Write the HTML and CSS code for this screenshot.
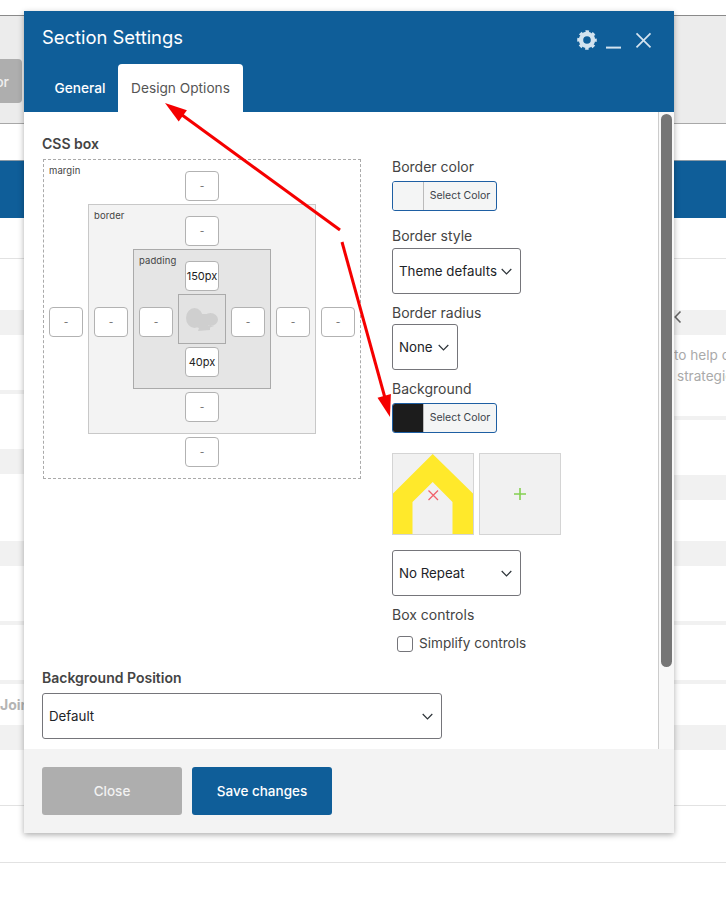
FILE: index.html
```html
<!DOCTYPE html>
<html lang="en">
<head>
<meta charset="utf-8">
<title>Section Settings</title>
<link rel="stylesheet" href="styles.css">
</head>
<body>
<div class="page">
  <div class="backdrop">
    <div class="bar-top"><span class="bar-btn">or</span></div>
    <div class="bar-blue"></div>
    <div class="rule rule-a"></div>
    <div class="cols">
      <div class="col col-left">
        <div class="band b-tall m51"></div>
        <div class="band b-thin m55"></div>
        <div class="band b-tall m55"></div>
        <div class="band b-tall m67"></div>
        <div class="band b-thin m55"></div>
        <div class="band b-thin m55"></div>
        <div class="join">Join</div>
        <div class="band b-tall m-join"></div>
        <div class="rule m55"></div>
      </div>
      <div class="col col-right">
        <div class="band b-tall m51 chev-band">
          <svg class="bg-chev" width="8" height="14" viewBox="0 0 8 14"><path d="M6.5 1.5 1.2 7l5.3 5.5" fill="none" stroke="#666" stroke-width="1.6"/></svg>
        </div>
        <p class="faint f1">to help o</p>
        <p class="faint f2">strategic</p>
        <div class="band b-thin m-r1"></div>
        <div class="band b-tall m55"></div>
        <div class="band b-tall m41"></div>
        <div class="band b-thin m55"></div>
        <div class="band b-thin m55"></div>
        <div class="band b-tall m41"></div>
        <div class="rule m55"></div>
      </div>
    </div>
    <div class="rule"></div>
  </div>

  <section class="modal">
    <header class="modal-head">
      <div class="head-top">
        <h1 class="title">Section Settings</h1>
        <div class="head-icons">
          <svg class="ic-gear" width="22" height="22" viewBox="0 0 22 22">
            <circle cx="11" cy="11" r="6" fill="none" stroke="#d3e3ef" stroke-width="4.4"/>
            <circle cx="11" cy="11" r="8.3" fill="none" stroke="#d3e3ef" stroke-width="3" stroke-dasharray="3.4 3.12" stroke-dashoffset="1.7"/>
          </svg>
          <svg class="ic-dash" width="17" height="22" viewBox="0 0 17 22"><path d="M1 18.6h15" stroke="#d3e3ef" stroke-width="2"/></svg>
          <svg class="ic-x" width="17" height="22" viewBox="0 0 17 22"><path d="M1.5 4.3l14 14M15.5 4.3l-14 14" stroke="#d3e3ef" stroke-width="1.7"/></svg>
        </div>
      </div>
      <nav class="tabs">
        <span class="tab">General</span>
        <span class="tab tab-active">Design Options</span>
      </nav>
    </header>

    <div class="modal-body">
      <div class="content">
        <div class="columns">
          <div class="col-box">
            <h2 class="label-strong box-title">CSS box</h2>
            <div class="box box-margin">
              <span class="box-name">margin</span>
              <span class="cell c-top"><span class="val">-</span></span>
              <span class="cell c-left"><span class="val">-</span></span>
              <div class="box box-border">
                <span class="box-name">border</span>
                <span class="cell c-top"><span class="val">-</span></span>
                <span class="cell c-left"><span class="val">-</span></span>
                <div class="box box-padding">
                  <span class="box-name">padding</span>
                  <span class="cell c-top"><span class="val val-set">150px</span></span>
                  <span class="cell c-left"><span class="val">-</span></span>
                  <div class="box-core">
                    <svg width="32" height="23" viewBox="0 0 32 23">
                      <ellipse cx="8.5" cy="10" rx="8.5" ry="10" fill="#cfcfcf"/>
                      <ellipse cx="24.5" cy="11.5" rx="7.5" ry="6.5" fill="#cfcfcf"/>
                      <path d="M14 6h8v12h6l-4 1.5V22l-12 1 1-3-5-2z" fill="#cfcfcf"/>
                    </svg>
                  </div>
                  <span class="cell c-right"><span class="val">-</span></span>
                  <span class="cell c-bottom"><span class="val val-set">40px</span></span>
                </div>
                <span class="cell c-right"><span class="val">-</span></span>
                <span class="cell c-bottom"><span class="val">-</span></span>
              </div>
              <span class="cell c-right"><span class="val">-</span></span>
              <span class="cell c-bottom"><span class="val">-</span></span>
            </div>
          </div>

          <div class="col-opts">
            <div class="label lb-color">Border color</div>
            <button class="colorbtn" type="button"><span class="swatch"></span><span class="colorbtn-text">Select Color</span></button>

            <div class="label lb-style">Border style</div>
            <div class="select sel-style"><span>Theme defaults</span>
              <svg class="chev" width="11" height="7" viewBox="0 0 11 7"><path d="M.7 1l4.8 4.8L10.3 1" fill="none" stroke="#2c3338" stroke-width="1.2"/></svg>
            </div>

            <div class="label lb-radius">Border radius</div>
            <div class="select sel-radius"><span>None</span>
              <svg class="chev" width="11" height="7" viewBox="0 0 11 7"><path d="M.7 1l4.8 4.8L10.3 1" fill="none" stroke="#2c3338" stroke-width="1.2"/></svg>
            </div>

            <div class="label lb-bg">Background</div>
            <button class="colorbtn" type="button"><span class="swatch swatch-dark"></span><span class="colorbtn-text">Select Color</span></button>

            <div class="tiles">
              <div class="tile">
                <svg width="80" height="80" viewBox="0 0 80 80">
                  <path d="M39.7 0 80 39.5V80H59.5V48L39.7 28 19.5 48V80H0V39.5z" fill="#ffe92b"/>
                  <path d="M35.5 36.5l9.5 9.5M45 36.5l-9.5 9.5" stroke="#f0626c" stroke-width="1.3"/>
                </svg>
              </div>
              <div class="tile">
                <svg width="80" height="80" viewBox="0 0 80 80"><path d="M40 34v12M34 40h12" stroke="#84d050" stroke-width="1.6"/></svg>
              </div>
            </div>

            <div class="select sel-repeat"><span>No Repeat</span>
              <svg class="chev" width="11" height="7" viewBox="0 0 11 7"><path d="M.7 1l4.8 4.8L10.3 1" fill="none" stroke="#2c3338" stroke-width="1.2"/></svg>
            </div>

            <div class="label lb-controls">Box controls</div>
            <label class="check"><span class="checkbox"></span><span class="check-text">Simplify controls</span></label>
          </div>
        </div>

        <div class="label-strong pos-title">Background Position</div>
        <div class="select sel-pos"><span>Default</span>
          <svg class="chev" width="11" height="7" viewBox="0 0 11 7"><path d="M.7 1l4.8 4.8L10.3 1" fill="none" stroke="#2c3338" stroke-width="1.2"/></svg>
        </div>
      </div>
      <div class="scrolltrack"><div class="scrollthumb"></div></div>
    </div>

    <footer class="modal-foot">
      <button class="btn btn-close" type="button">Close</button>
      <button class="btn btn-save" type="button">Save changes</button>
    </footer>
  </section>

  <svg class="arrows" width="726" height="897" viewBox="0 0 726 897">
    <path d="M340 230 178 112" stroke="#f50000" stroke-width="3" fill="none"/>
    <path d="M165 103 186.9 110.2 178.7 121.6z" fill="#f50000"/>
    <path d="M342 242 385 398" stroke="#f50000" stroke-width="3" fill="none"/>
    <path d="M390 417 377.5 397.7 390.9 393.9z" fill="#f50000"/>
  </svg>
</div>
</body>
</html>
```

FILE: styles.css
```css
* { box-sizing: border-box; }
html, body { margin: 0; padding: 0; background: #fff; }
body { font-family: Inter, "Liberation Sans", sans-serif; font-size: 14px; color: #444; }
.page { position: relative; width: 726px; height: 897px; overflow: hidden; }

/* page behind the dialog */
.backdrop { padding-top: 15px; }
.bar-top { height: 109px; background: #ececec; border-top: 1px solid #8a8a8a; border-bottom: 1px solid #a8a8a8; padding-top: 43px; }
.bar-btn { display: flex; align-items: center; justify-content: flex-end; width: 22px; height: 44px; padding-right: 13px; background: #aeaeae; border-radius: 0 4px 4px 0; color: #eee; font-size: 14px; font-weight: 500; }
.bar-blue { height: 58px; margin-top: 36px; background: #0f5e99; border-top: 1px solid #8a9aa6; }
.rule { height: 1px; background: #e2e2e2; }
.rule-a { margin-top: 40px; }
.cols { display: grid; grid-template-columns: 1fr 1fr; height: 603px; }
.col { min-width: 0; }
.band { background: #f1f1f1; }
.b-tall { height: 25px; }
.b-thin { height: 4px; }
.m51 { margin-top: 51px; }
.m55 { margin-top: 55px; }
.m67 { margin-top: 67px; }
.m41 { margin-top: 41px; }
.m-r1 { margin-top: 29px; }
.m-join { margin-top: 11px; }
.join { margin-top: 11px; height: 19px; line-height: 19px; font-weight: 700; color: #b4b4b4; font-size: 14px; }
.chev-band { position: relative; padding-left: 311px; }
.bg-chev { display: block; margin-top: 5px; }
.faint { margin: 0; color: #aaa; font-size: 13.6px; height: 21px; line-height: 21px; white-space: nowrap; }
.f1 { margin-top: 10px; padding-left: 311px; }
.f2 { padding-left: 314px; }

/* dialog */
.modal { position: absolute; left: 24px; top: 11px; width: 650px; height: 822px; display: flex; flex-direction: column; background: #fff; box-shadow: 0 2px 6px rgba(0,0,0,.32); }
.modal-head { height: 101px; flex: none; background: #0f5e99; }
.head-top { height: 53px; padding: 5px 22px 0 18px; display: flex; align-items: center; justify-content: space-between; }
.title { margin: -6px 0 0; font-size: 18.4px; font-weight: 400; color: #fff; line-height: 24px; }
.head-icons { display: flex; align-items: center; }
.ic-dash { margin-left: 7px; }
.ic-x { margin-left: 13px; }
.tabs { display: flex; height: 48px; padding-left: 18px; }
.tab { display: flex; align-items: center; justify-content: center; width: 76px; color: #fff; font-size: 13.7px; font-weight: 500; }
.tab-active { width: 125px; background: #fff; color: #555; font-weight: 400; border-radius: 4px 4px 0 0; }

.modal-body { flex: 1; min-height: 0; display: flex; overflow: hidden; }
.content { flex: 1; padding: 22px 0 0 18px; min-width: 0; }
.columns { display: grid; grid-template-columns: 350px auto; justify-content: start; }
.label-strong { margin: 0; font-size: 14px; font-weight: 600; color: #444; line-height: 20px; }
.box-title { margin-bottom: 5px; }

.box { position: relative; display: grid; grid-template-columns: 34px auto 34px; grid-template-rows: 30px auto 30px; column-gap: 5px; row-gap: 3px; padding: 11px 5px; }
.box > .box, .box > .box-core { grid-column: 2; grid-row: 2; }
.box-margin { width: 318px; height: 320px; margin-left: 1px; border: 1px dashed #aaa; background: #fff; }
.box-border { width: 228px; height: 230px; border: 1px solid #c8c8c8; background: #f3f3f3; }
.box-padding { width: 138px; height: 140px; border: 1px solid #aaa; background: #e5e5e5; }
.box-core { width: 48px; height: 50px; border: 1px solid #aaa; background: #e3e3e3; display: flex; align-items: center; justify-content: center; }
.box-core svg { display: block; flex: none; }
.box-name { position: absolute; left: 5px; top: 5px; font-size: 9.5px; line-height: 12px; color: #444; letter-spacing: .1px; }
.cell { display: flex; }
.c-top { grid-column: 2; grid-row: 1; justify-content: center; }
.c-bottom { grid-column: 2; grid-row: 3; justify-content: center; }
.c-left { grid-column: 1; grid-row: 2; align-items: center; padding-top: 6px; }
.c-right { grid-column: 3; grid-row: 2; align-items: center; padding-top: 6px; }
.val { display: flex; align-items: center; justify-content: center; width: 34px; height: 30px; background: #fff; border: 1px solid #b2b2b2; border-radius: 4px; font-size: 10px; color: #666; }
.val-set { color: #222; font-size: 11px; }

.col-opts { padding-top: 23px; width: 240px; }
.label { font-size: 14px; line-height: 20px; color: #444; }
.lb-color { margin-bottom: 4px; }
.lb-style { margin-top: 15px; margin-bottom: 2px; }
.lb-radius { margin-top: 9px; margin-bottom: 1px; }
.lb-bg { margin-top: 9px; margin-bottom: 4px; }
.lb-controls { margin-top: 9px; }

.colorbtn { display: flex; width: 105px; height: 30px; padding: 0; border: 1px solid #1e5fa3; border-radius: 3px; background: #f4f5f5; font-family: inherit; overflow: hidden; }
.swatch { width: 31px; height: 100%; background: #f4f5f5; border-right: 1px solid #bbb; flex: none; }
.swatch-dark { background: #1c1c1c; }
.colorbtn-text { flex: 1; font-size: 10.5px; line-height: 28px; color: #3c434a; text-align: center; white-space: nowrap; }

.select { display: flex; align-items: center; justify-content: space-between; height: 46px; padding: 0 8px 0 6px; border: 1px solid #75757a; border-radius: 3px; background: #fff; color: #1d2327; font-size: 13.3px; white-space: nowrap; }
.sel-style, .sel-repeat { width: 129px; }
.sel-radius { width: 66px; }
.sel-repeat { margin-top: 15px; }
.sel-pos { width: 400px; }
.chev { flex: none; }

.tiles { display: flex; gap: 5px; margin-top: 20px; }
.tile { width: 82px; height: 82px; border: 1px solid #d4d4d4; background: #f1f1f1; }
.tile svg { display: block; }

.check { display: flex; align-items: center; gap: 6px; margin: 11px 0 0 5px; height: 16px; }
.check-text { font-size: 13.6px; line-height: 16px; padding-bottom: 2px; }
.checkbox { width: 16px; height: 16px; border: 1px solid #75757a; border-radius: 3px; background: #fff; flex: none; }

.pos-title { margin-top: 16px; margin-bottom: 5px; }

.scrolltrack { flex: none; width: 16px; border-left: 1px solid #ccc; background: #f8f8f8; padding: 2px 2px 0 2px; }
.scrollthumb { width: 11px; height: 553px; border-radius: 6px; background: #767676; }

.modal-foot { flex: none; height: 84px; padding: 18px; display: flex; gap: 10px; background: #f3f3f3; }
.btn { width: 140px; height: 48px; border: 0; border-radius: 3px; padding: 0; font-family: inherit; font-size: 13.5px; font-weight: 500; color: #fff; }
.btn-close { background: #aeaeae; color: #f2f2f2; }
.btn-save { background: #0f5e99; }

.arrows { position: absolute; left: 0; top: 0; pointer-events: none; }
```
